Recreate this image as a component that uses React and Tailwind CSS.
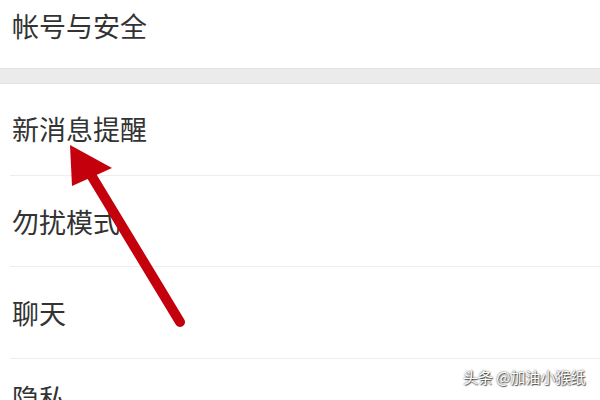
export default function App() {
  const font = { fontFamily: '"Noto Sans CJK SC", "Noto Sans", sans-serif' };
  const rowText = "text-[27px] leading-none text-[#333333] tracking-[0px]";
  return (
    <div className="relative w-[600px] h-[400px] overflow-hidden bg-white" style={font}>
      <div className="h-[68px] pl-[12px] pt-[12px]">
        <span className={rowText}>帐号与安全</span>
      </div>
      <div className="h-[16px] bg-[#ebebeb] border-y border-[#e4e4e4]" />
      <div className="flex flex-col">
        <div className="h-[91px] pl-[12px] flex items-center pb-[2px]">
          <span className={rowText}>新消息提醒</span>
        </div>
        <div className="ml-[10px] h-px bg-[#eeeeee]" />
        <div className="h-[90px] pl-[12px] flex items-center">
          <span className={rowText}>勿扰模式</span>
        </div>
        <div className="ml-[10px] h-px bg-[#eeeeee]" />
        <div className="h-[91px] pl-[12px] flex items-center">
          <span className={rowText}>聊天</span>
        </div>
        <div className="ml-[10px] h-px bg-[#eeeeee]" />
        <div className="h-[91px] pl-[12px] pt-[25px]">
          <span className={rowText}>隐私</span>
        </div>
      </div>

      <svg className="absolute left-0 top-0" width="600" height="400" viewBox="0 0 600 400">
        <line x1="180" y1="322" x2="88" y2="170" stroke="#c4000c" strokeWidth="10" strokeLinecap="round" />
        <polygon points="70,145 112,168 72,186" fill="#c4000c" />
      </svg>

      <div
        className="absolute left-[463px] top-[369px] text-[15px] leading-none text-white"
        style={{ textShadow: "0 0 2px rgba(0,0,0,0.8), 1px 1px 1px rgba(0,0,0,0.6)" }}
      >
        头条 @加油小猴纸
      </div>
    </div>
  );
}
